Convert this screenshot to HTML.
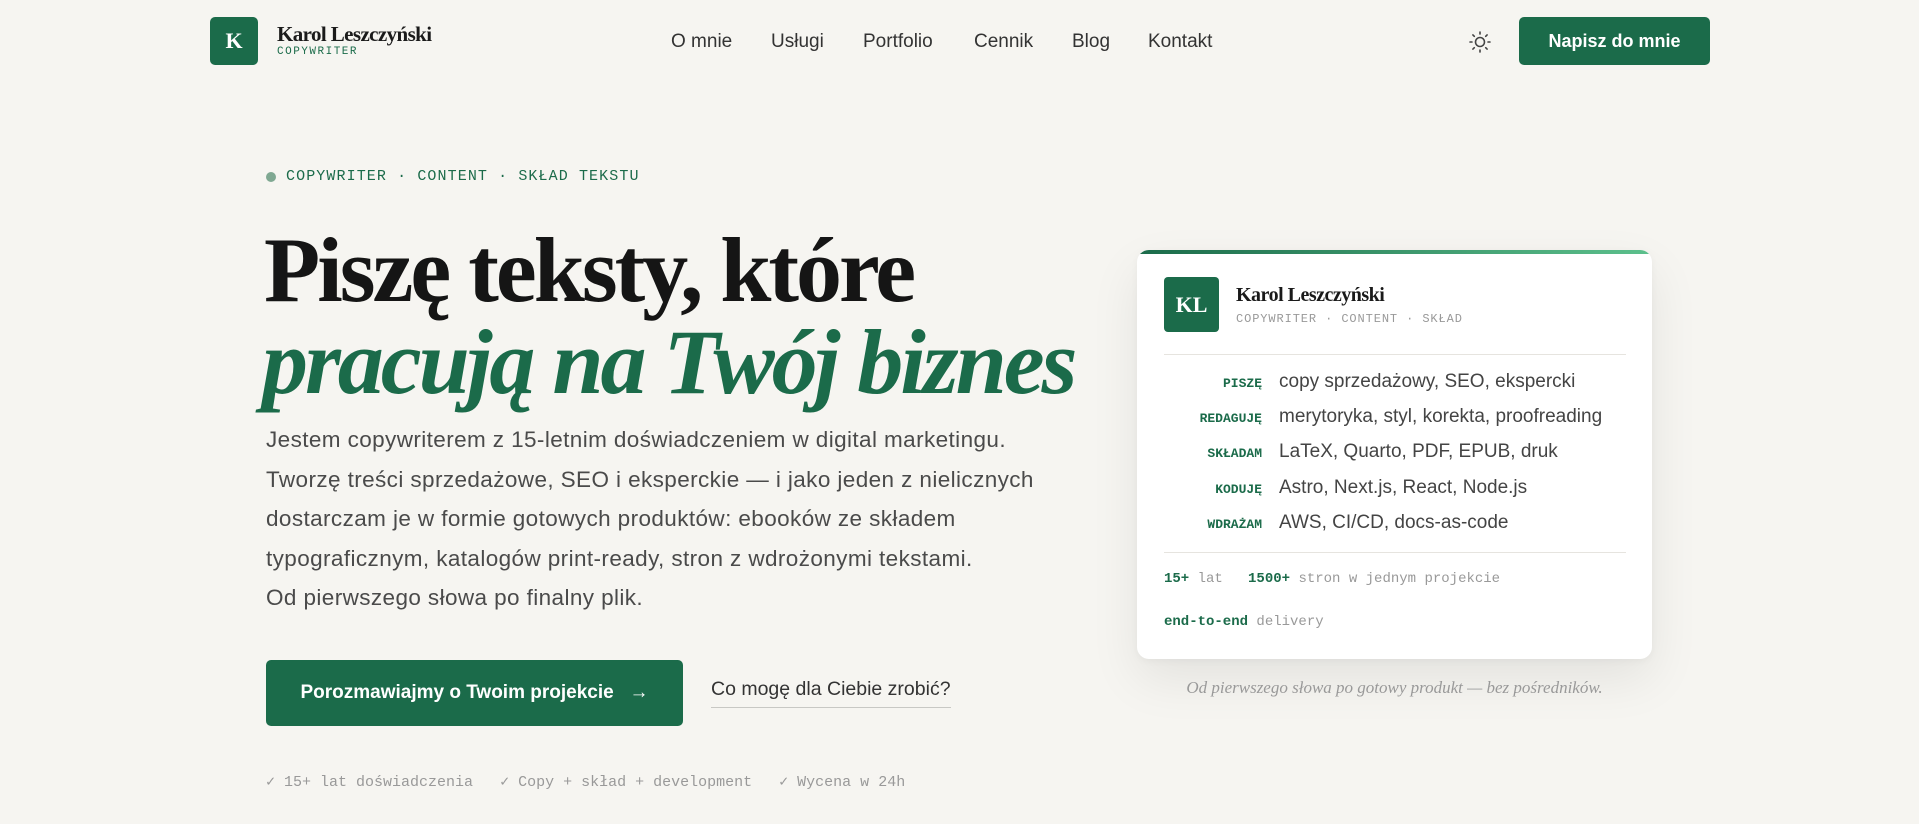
<!DOCTYPE html>
<html><head><meta charset="utf-8"><style>
*{margin:0;padding:0;box-sizing:border-box}
body{width:1919px;height:824px;background:#f6f5f1;font-family:"Liberation Sans",sans-serif;position:relative;overflow:hidden;color:#1a1a1a}
.abs{position:absolute;white-space:nowrap}
.g{color:#1b6b4a}
.mono{font-family:"Liberation Mono",monospace}
.serif{font-family:"Liberation Serif",serif}
.nav a{position:absolute;top:31px;font-size:19px;color:#333;text-decoration:none}
.row{position:absolute;left:1160px;height:35px;display:flex;align-items:baseline;white-space:nowrap}
.row .l{width:102px;text-align:right;font:bold 13px "Liberation Mono",monospace;color:#1b6b4a}
.row .v{margin-left:17px;font-size:19px;color:#444}
</style></head><body>
<div class="abs" style="left:210px;top:17px;width:48px;height:48px;background:#1b6b4a;border-radius:5px;color:#fff;font:bold 22px 'Liberation Serif',serif;display:flex;align-items:center;justify-content:center">K</div>
<div class="abs serif" style="left:277px;top:22px;font-size:21px;font-weight:bold;letter-spacing:-0.6px">Karol Leszczyński</div>
<div class="abs mono g" style="left:277px;top:46px;font-size:11px;letter-spacing:1.5px">COPYWRITER</div>
<div class="nav">
<a style="left:671px">O mnie</a><a style="left:771px">Usługi</a><a style="left:863px">Portfolio</a><a style="left:974px">Cennik</a><a style="left:1072px">Blog</a><a style="left:1148px">Kontakt</a>
</div>
<svg class="abs" style="left:1468px;top:30px" width="24" height="24" viewBox="0 0 24 24" fill="none" stroke="#444" stroke-width="1.6" stroke-linecap="round"><circle cx="12" cy="12" r="4.5"/><path d="M12 2v2M12 20v2M2 12h2M20 12h2M4.9 4.9l1.4 1.4M17.7 17.7l1.4 1.4M4.9 19.1l1.4-1.4M17.7 6.3l1.4-1.4"/></svg>
<div class="abs" style="left:1519px;top:17px;width:191px;height:48px;background:#1b6b4a;border-radius:5px;color:#fff;font-weight:bold;font-size:18px;display:flex;align-items:center;justify-content:center">Napisz do mnie</div>

<div class="abs" style="left:266px;top:172px;width:10px;height:10px;border-radius:50%;background:#7fa892"></div>
<div class="abs mono g" style="left:286px;top:168px;font-size:15px;letter-spacing:1.1px">COPYWRITER · CONTENT · SKŁAD TEKSTU</div>
<div class="abs serif" style="left:264px;top:220px;font-size:92px;font-weight:bold;letter-spacing:-3px;line-height:100px;color:#151515">Piszę teksty, które</div>
<div class="abs serif g" style="left:262px;top:312px;font-size:92px;font-weight:bold;font-style:italic;letter-spacing:-3px;line-height:100px">pracują na Twój biznes</div>
<div class="abs" style="left:266px;top:420px;font-size:22.5px;line-height:39.5px;color:#4a4a4a;letter-spacing:0.4px">Jestem copywriterem z 15-letnim doświadczeniem w digital marketingu.<br>Tworzę treści sprzedażowe, SEO i eksperckie — i jako jeden z nielicznych<br>dostarczam je w formie gotowych produktów: ebooków ze składem<br>typograficznym, katalogów print-ready, stron z wdrożonymi tekstami.<br>Od pierwszego słowa po finalny plik.</div>
<div class="abs" style="left:266px;top:660px;width:417px;height:66px;background:#1b6b4a;border-radius:5px;color:#fff;font-weight:bold;font-size:19px;display:flex;align-items:center;justify-content:center">Porozmawiajmy o Twoim projekcie &nbsp;&nbsp;→</div>
<div class="abs" style="left:711px;top:678px;font-size:19.5px;color:#333;padding-bottom:6px;border-bottom:1px solid #c8c8c4">Co mogę dla Ciebie zrobić?</div>
<div class="abs mono" style="left:266px;top:772px;font-size:15px;color:#999">✓ 15+ lat doświadczenia &nbsp; ✓ Copy + skład + development &nbsp; ✓ Wycena w 24h</div>

<div class="abs" style="left:1137px;top:250px;width:515px;height:409px;background:#fff;border-radius:12px;box-shadow:0 20px 50px rgba(0,0,0,.08),0 2px 8px rgba(0,0,0,.04);overflow:hidden">
<div style="height:4px;background:linear-gradient(90deg,#1b6b4a,#5cc08c)"></div>
</div>
<div class="abs" style="left:1164px;top:277px;width:55px;height:55px;background:#1b6b4a;border-radius:4px;color:#fff;font:bold 22px 'Liberation Serif',serif;display:flex;align-items:center;justify-content:center">KL</div>
<div class="abs serif" style="left:1236px;top:284px;font-size:20px;font-weight:bold;letter-spacing:-0.5px">Karol Leszczyński</div>
<div class="abs mono" style="left:1236px;top:312px;font-size:12px;color:#999;letter-spacing:0.9px">COPYWRITER · CONTENT · SKŁAD</div>
<div class="abs" style="left:1164px;top:354px;width:462px;height:1px;background:#e6e4df"></div>
<div class="row" style="top:371px"><span class="l">PISZĘ</span><span class="v">copy sprzedażowy, SEO, ekspercki</span></div>
<div class="row" style="top:406px"><span class="l">REDAGUJĘ</span><span class="v">merytoryka, styl, korekta, proofreading</span></div>
<div class="row" style="top:441px"><span class="l">SKŁADAM</span><span class="v">LaTeX, Quarto, PDF, EPUB, druk</span></div>
<div class="row" style="top:477px"><span class="l">KODUJĘ</span><span class="v">Astro, Next.js, React, Node.js</span></div>
<div class="row" style="top:512px"><span class="l">WDRAŻAM</span><span class="v">AWS, CI/CD, docs-as-code</span></div>
<div class="abs" style="left:1164px;top:552px;width:462px;height:1px;background:#e6e4df"></div>
<div class="abs mono" style="left:1164px;top:571px;font-size:14px;color:#999"><b class="g">15+</b> lat &nbsp; <b class="g">1500+</b> stron w jednym projekcie</div>
<div class="abs mono" style="left:1164px;top:614px;font-size:14px;color:#999"><b class="g">end-to-end</b> delivery</div>
<div class="abs serif" style="left:1137px;width:515px;text-align:center;top:678px;font-size:17px;font-style:italic;color:#999">Od pierwszego słowa po gotowy produkt — bez pośredników.</div>
</body></html>
